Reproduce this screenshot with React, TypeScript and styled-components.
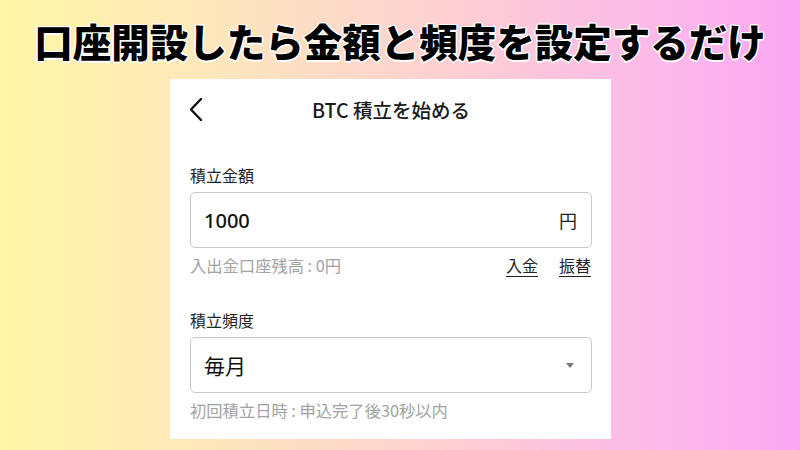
import React from 'react';
import styled, { createGlobalStyle } from 'styled-components';

const GlobalStyle = createGlobalStyle`
  html, body {
    margin: 0;
    padding: 0;
  }
  body {
    font-family: "Noto Sans CJK JP", "Noto Sans", sans-serif;
    color: #1a1a1a;
  }
`;

const Page = styled.div`
  width: 800px;
  height: 450px;
  overflow: hidden;
  display: flex;
  flex-direction: column;
  align-items: center;
  background: linear-gradient(90deg, #fff6a6 0%, #fde6bd 28%, #fdd0d2 55%, #fcbde6 78%, #fba8f3 100%);
`;

const Heading = styled.h1`
  margin: 20px 0 0;
  height: 40px;
  line-height: 40px;
  font-size: 38.5px;
  font-weight: 900;
  color: #000;
  letter-spacing: 0;
  text-shadow:
    1.5px 0 0 #fff, -1.5px 0 0 #fff, 0 1.5px 0 #fff, 0 -1.5px 0 #fff,
    1px 1px 0 #fff, -1px 1px 0 #fff, 1px -1px 0 #fff, -1px -1px 0 #fff;
`;

const Card = styled.div`
  align-self: flex-start;
  margin: 19px 0 0 170px;
  width: 441px;
  height: 360px;
  box-sizing: border-box;
  background: #fff;
  padding: 0 19px 0 20px;
  display: flex;
  flex-direction: column;
`;

const Header = styled.div`
  position: relative;
  height: 60px;
  display: flex;
  align-items: center;
  justify-content: center;
`;

const BackButton = styled.button`
  position: absolute;
  left: 0;
  top: 18px;
  width: 24px;
  height: 24px;
  padding: 0;
  border: none;
  background: none;
  display: flex;
  align-items: center;
`;

const HeaderTitle = styled.div`
  font-size: 19.5px;
  font-weight: 500;
  color: #1a1a1a;
`;

const Label = styled.div<{ $top: number }>`
  margin-top: ${p => p.$top}px;
  height: 20px;
  line-height: 20px;
  font-size: 16px;
  color: #222;
`;

const Field = styled.div`
  margin-top: 7px;
  height: 56px;
  box-sizing: border-box;
  border: 1px solid #c9c9c9;
  border-radius: 5px;
  display: flex;
  align-items: center;
  justify-content: space-between;
  padding: 0 14px 0 13px;
`;

const Amount = styled.span`
  font-family: "Noto Sans", "Noto Sans CJK JP", sans-serif;
  font-size: 20px;
  font-weight: 500;
  color: #111;
`;

const Unit = styled.span`
  font-size: 18px;
  color: #222;
`;

const SelectValue = styled.span`
  font-size: 21px;
  color: #111;
`;

const Caret = styled.span`
  width: 0;
  height: 0;
  margin-right: 3px;
  border-left: 4px solid transparent;
  border-right: 4px solid transparent;
  border-top: 5px solid #777;
`;

const HelpRow = styled.div`
  margin-top: 7px;
  height: 20px;
  line-height: 20px;
  display: flex;
  align-items: center;
  justify-content: space-between;
`;

const HelpText = styled.span`
  font-size: 16.3px;
  color: #a2a2a2;
`;

const Links = styled.div`
  display: flex;
  gap: 21px;
  margin-right: 1px;
`;

const TextLink = styled.a`
  font-size: 16px;
  color: #222;
  text-decoration: underline;
  text-underline-offset: 4px;
  text-decoration-thickness: 1px;
  cursor: pointer;
`;

const App: React.FC = () => {
  return (
    <>
      <GlobalStyle />
      <Page>
        <Heading>口座開設したら金額と頻度を設定するだけ</Heading>
        <Card>
          <Header>
            <BackButton aria-label="戻る">
              <svg width="14" height="24" viewBox="0 0 14 24">
                <polyline
                  points="11,2 1,12.5 11,23"
                  fill="none"
                  stroke="#111"
                  strokeWidth="2.4"
                  strokeLinecap="round"
                  strokeLinejoin="round"
                />
              </svg>
            </BackButton>
            <HeaderTitle>BTC 積立を始める</HeaderTitle>
          </Header>

          <Label $top={26}>積立金額</Label>
          <Field>
            <Amount>1000</Amount>
            <Unit>円</Unit>
          </Field>
          <HelpRow>
            <HelpText>入出金口座残高 : 0円</HelpText>
            <Links>
              <TextLink>入金</TextLink>
              <TextLink>振替</TextLink>
            </Links>
          </HelpRow>

          <Label $top={35}>積立頻度</Label>
          <Field>
            <SelectValue>毎月</SelectValue>
            <Caret />
          </Field>
          <HelpRow>
            <HelpText>初回積立日時 : 申込完了後30秒以内</HelpText>
          </HelpRow>
        </Card>
      </Page>
    </>
  );
};

export default App;
